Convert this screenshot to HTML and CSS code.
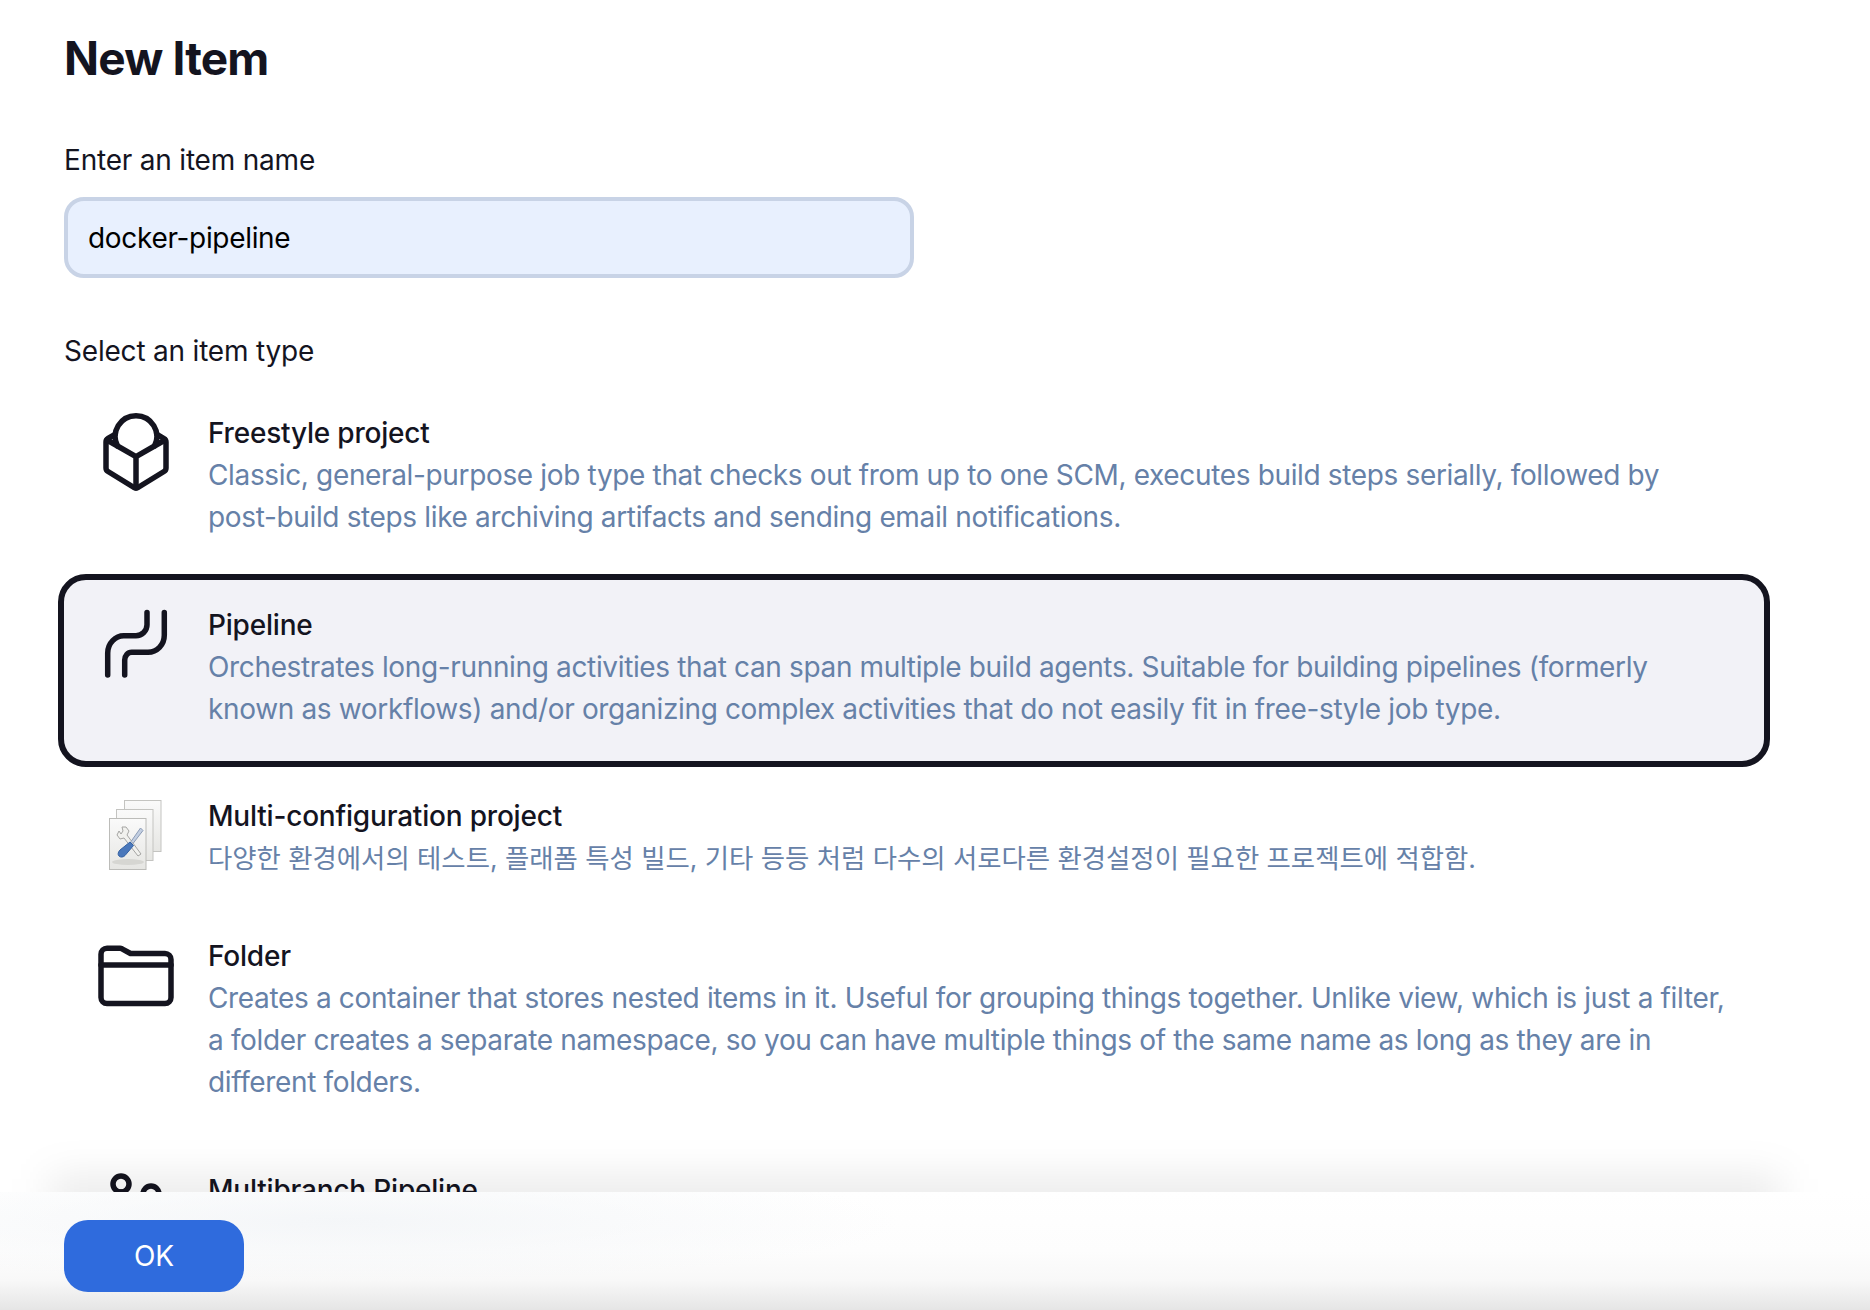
FILE: index.html
```html
<!DOCTYPE html>
<html lang="en">
<head>
    <meta charset="UTF-8">
    <meta name="viewport" content="width=device-width, initial-scale=1.0">
    <title>New Item</title>
    <link rel="stylesheet" href="styles.css">
</head>
<body>
    <main class="content">
        <h1>New Item</h1>
        <label class="field-label" for="itemName">Enter an item name</label>
        <input class="name-input" id="itemName" type="text" value="docker-pipeline">
        <div class="field-label type-label">Select an item type</div>

        <ul class="item-list">
            <li class="item">
                <div class="item-icon">
                    <svg viewBox="0 0 80 80" class="line-icon">
                        <path d="M19 22.5L12 26.5Q10 27.7 10 30V56Q10 58.3 12 59.5L38 75.5Q40 76.5 42 75.5L68 59.5Q70 58.3 70 56V30Q70 27.7 68 26.5L61 22.5"/>
                        <path d="M11 28L40 44.7L69 28M40 44.7V76"/>
                        <path d="M21.5 34A20.8 20.8 0 1 1 58.5 34"/>
                    </svg>
                </div>
                <div class="item-text">
                    <div class="item-name">Freestyle project</div>
                    <div class="item-desc">Classic, general-purpose job type that checks out from up to one SCM, executes build steps serially, followed by post-build steps like archiving artifacts and sending email notifications.</div>
                </div>
            </li>
            <li class="item item-active">
                <div class="item-icon">
                    <svg viewBox="0 0 80 80" class="line-icon">
                        <path d="M11.7 71V49c0-10 8-17.3 16-17.3H40c6 0 11-5 11-11V8.5"/>
                        <path d="M28.7 71V56c0-4 3-7.7 7-7.7H52c9 0 16.3-7.5 16.3-17V8.5"/>
                    </svg>
                </div>
                <div class="item-text">
                    <div class="item-name">Pipeline</div>
                    <div class="item-desc">Orchestrates long-running activities that can span multiple build agents. Suitable for building pipelines (formerly known as workflows) and/or organizing complex activities that do not easily fit in free-style job type.</div>
                </div>
            </li>
            <li class="item item-short">
                <div class="item-icon">
                    <svg viewBox="0 0 80 80">
                        <defs>
                            <linearGradient id="pageFill" x1="0" y1="0" x2="0" y2="1">
                                <stop offset="0" stop-color="#fafafa"/>
                                <stop offset="1" stop-color="#e6e6e3"/>
                            </linearGradient>
                        </defs>
                        <rect x="28.5" y="5.5" width="36.5" height="51" fill="url(#pageFill)" stroke="#c4c4c1"/>
                        <rect x="20.5" y="14.5" width="36.5" height="51" fill="url(#pageFill)" stroke="#c4c4c1"/>
                        <rect x="13.5" y="23.5" width="36.5" height="51" fill="url(#pageFill)" stroke="#bcbcb9"/>
                        <ellipse cx="32" cy="67" rx="16" ry="3" fill="#d6d6d2"/>
                        <path d="M23 36l-2 4 3 4 4-1 14 18 3-2-14-19 2-4-3-4-4 0 1 4-2 3z" fill="#f1f1ee" stroke="#a5a5a3" stroke-width="1"/>
                        <path d="M44.5 33l2.5 2.5-10 13-2-2z" fill="#c3cfe2" stroke="#8c9cb6" stroke-width="1"/>
                        <path d="M34 47l3.5 3.500-8.500 10c-2 2-4.500 2-6 .5s-1-4 1-6z" fill="#4a78bb" stroke="#3361a3" stroke-width="1"/>
                    </svg>
                </div>
                <div class="item-text">
                    <div class="item-name">Multi-configuration project</div>
                    <div class="item-desc desc-ko">다양한 환경에서의 테스트, 플래폼 특성 빌드, 기타 등등 처럼 다수의 서로다른 환경설정이 필요한 프로젝트에 적합함.</div>
                </div>
            </li>
            <li class="item">
                <div class="item-icon">
                    <svg viewBox="0 0 80 80" class="line-icon">
                        <path d="M11 68.500H69a6 6 0 0 0 6-6V24.500a6 6 0 0 0-6-6H34.500L26 13.800Q25 13.300 24 13.300H11a6 6 0 0 0-6 6V62.500a6 6 0 0 0 6 6Z"/>
                        <path d="M5 30H75"/>
                    </svg>
                </div>
                <div class="item-text">
                    <div class="item-name">Folder</div>
                    <div class="item-desc">Creates a container that stores nested items in it. Useful for grouping things together. Unlike view, which is just a filter, a folder creates a separate namespace, so you can have multiple things of the same name as long as they are in different folders.</div>
                </div>
            </li>
            <li class="item">
                <div class="item-icon">
                    <svg viewBox="0 0 80 80" class="line-icon">
                        <circle cx="25" cy="15" r="8"/>
                        <circle cx="55" cy="25" r="8"/>
                        <path d="M25 23V60M55 33v6c0 8-6 12-14 12H25"/>
                    </svg>
                </div>
                <div class="item-text">
                    <div class="item-name">Multibranch Pipeline</div>
                </div>
            </li>
        </ul>
    </main>

    <footer class="action-bar">
        <button class="btn-ok">OK</button>
    </footer>
</body>
</html>
```

FILE: styles.css
```css
* {
    box-sizing: border-box;
}

body {
    margin: 0;
    height: 100vh;
    display: flex;
    flex-direction: column;
    overflow: hidden;
    background: #fff;
    color: #14141f;
    font-family: Inter, "Noto Sans CJK KR", sans-serif;
    font-size: 28px;
    line-height: 42px;
}

.content {
    flex: 1;
    min-height: 0;
    overflow: hidden;
    padding: 29px 100px 0 64px;
}

h1 {
    margin: 0 0 52px;
    font-size: 46px;
    line-height: 58px;
    font-weight: 700;
    letter-spacing: -0.85px;
}

.field-label {
    display: block;
    margin-bottom: 16px;
    letter-spacing: -0.2px;
}

.name-input {
    display: block;
    width: 850px;
    height: 81px;
    padding: 0 20px;
    border: 4px solid #c8d3e6;
    border-radius: 20px;
    background: #e8f0fe;
    color: #000;
    font: inherit;
    letter-spacing: -0.32px;
    outline: none;
}

.type-label {
    margin: 52px 0 10px;
}

.item-list {
    list-style: none;
    margin: 0 0 0 -6px;
    padding: 0;
}

.item {
    display: flex;
    gap: 34px;
    padding: 24px 34px 30px;
    border: 6px solid transparent;
    border-radius: 28px;
}

.item-active {
    padding-bottom: 31px;
    margin-bottom: -2px;
    border-color: #14141f;
    background: #f2f2f7;
}

.item-short {
    padding-bottom: 20px;
}

.item-icon {
    flex: none;
    width: 76px;
    height: 80px;
    display: flex;
    justify-content: center;
}

.item-icon svg {
    flex: none;
    width: 80px;
    height: 80px;
}

.line-icon {
    fill: none;
    stroke: #14141f;
    stroke-width: 5.500;
    stroke-linecap: round;
    stroke-linejoin: round;
}

.item-name {
    font-weight: 500;
    letter-spacing: -0.2px;
}

.item-desc {
    color: #6681a8;
    letter-spacing: -0.35px;
}

.desc-ko {
    font-size: 26.400px;
    letter-spacing: 0;
}

.action-bar {
    position: relative;
    z-index: 1;
    flex: none;
    height: 118px;
    padding: 28px 64px 0;
}

/* shadow that leaks out above the bar */
.action-bar::before {
    content: "";
    position: absolute;
    z-index: -1;
    left: 50px;
    right: 90px;
    top: -14px;
    height: 40px;
    background: rgba(0, 0, 0, 0.09);
    filter: blur(20px);
}

.action-bar::after {
    content: "";
    position: absolute;
    z-index: -1;
    inset: 0;
    background:
        radial-gradient(ellipse 560px 60px at 340px 30px, rgba(240, 243, 246, 0.7), rgba(240, 243, 246, 0)),
        linear-gradient(to bottom, #fff 0, #fdfdfd 50%, #f8f8f8 75%, #e5e5e5 100%);
}

.btn-ok {
    width: 180px;
    height: 72px;
    border: none;
    border-radius: 24px;
    background: #2f6bdd;
    color: #fff;
    font: inherit;
    cursor: pointer;
}
```
